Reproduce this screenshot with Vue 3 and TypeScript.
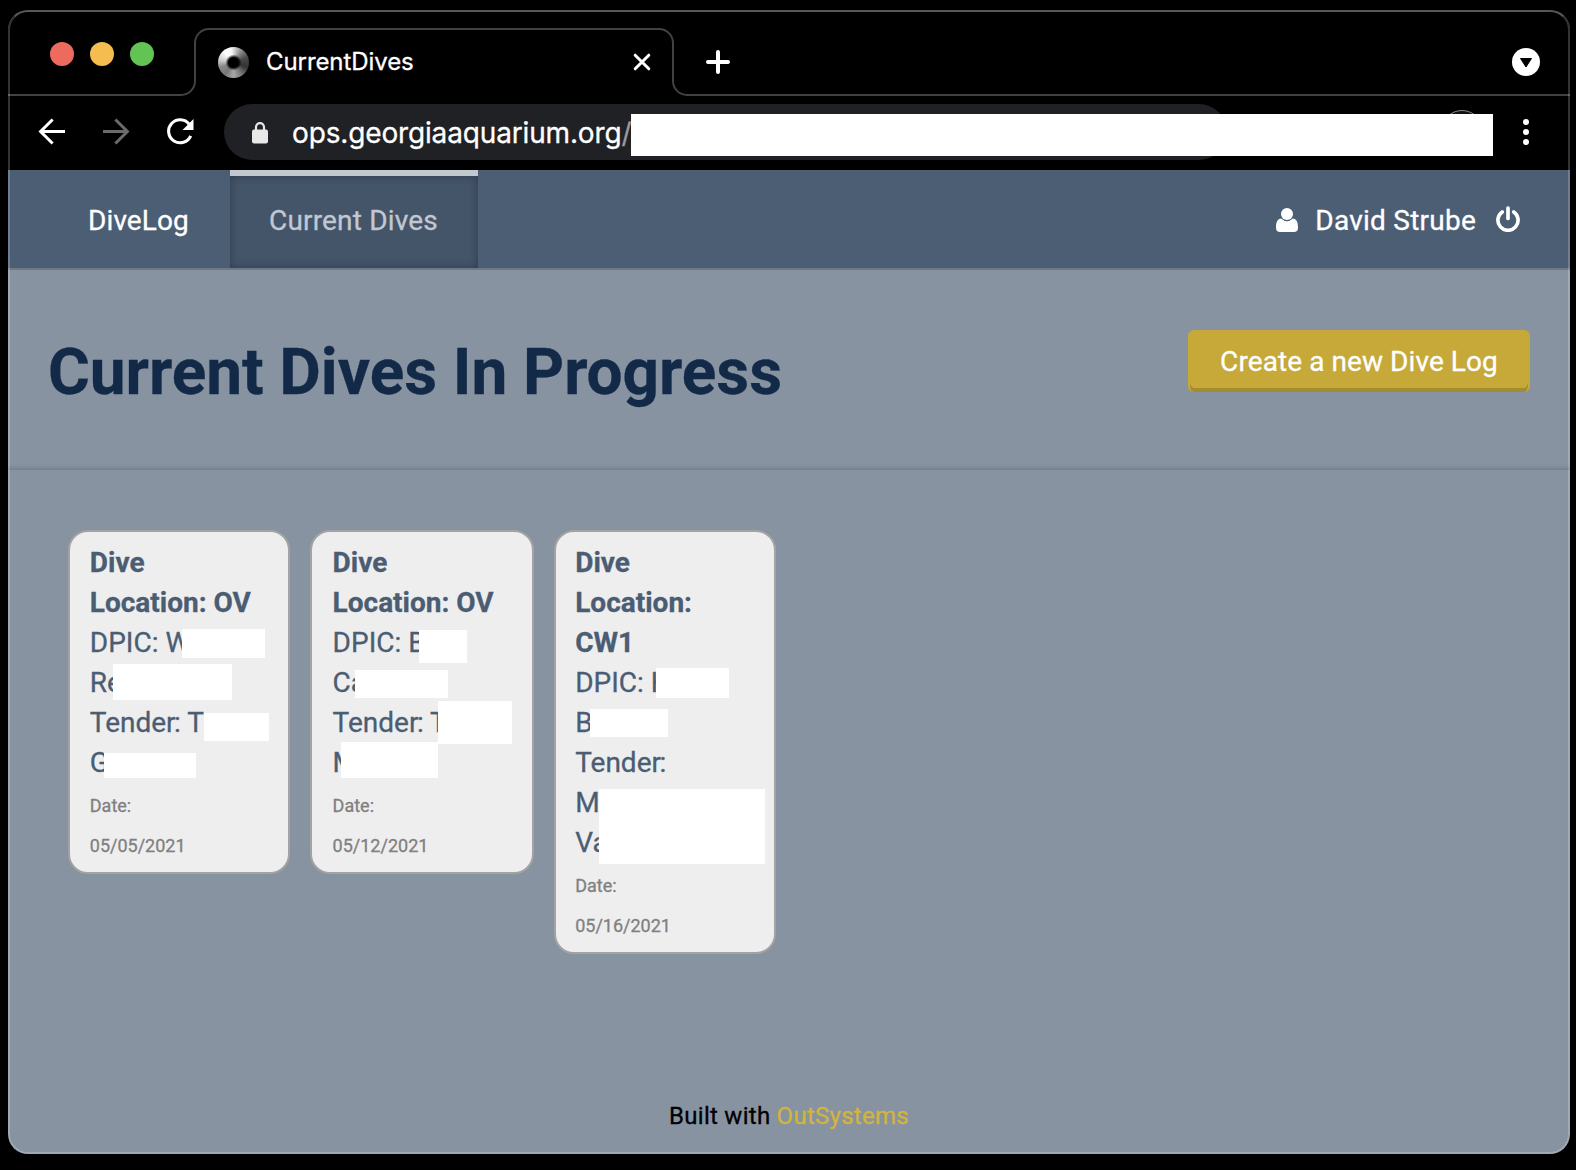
<script setup lang="ts">
interface Mask {
  x: number
  y: number
  w: number
  h: number
}

interface Dive {
  location: string[]
  dpic: string[]
  tender: string[]
  date: string
  masks: Mask[]
}

const dives: Dive[] = [
  {
    location: ['Dive', 'Location: OV'],
    dpic: ['DPIC: W', 'Re'],
    tender: ['T', 'G'],
    date: '05/05/2021',
    masks: [
      { x: 114, y: 99, w: 83, h: 29 },
      { x: 45, y: 134, w: 119, h: 36 },
      { x: 136, y: 183, w: 65, h: 28 },
      { x: 36, y: 223, w: 92, h: 25 },
    ],
  },
  {
    location: ['Dive', 'Location: OV'],
    dpic: ['DPIC: B', 'Ca'],
    tender: ['T', 'M'],
    date: '05/12/2021',
    masks: [
      { x: 109, y: 100, w: 48, h: 33 },
      { x: 45, y: 140, w: 93, h: 28 },
      { x: 128, y: 171, w: 74, h: 43 },
      { x: 31, y: 212, w: 97, h: 36 },
    ],
  },
  {
    location: ['Dive', 'Location:', 'CW1'],
    dpic: ['DPIC: H', 'B'],
    tender: ['', 'M', 'Va'],
    date: '05/16/2021',
    masks: [
      { x: 102, y: 138, w: 73, h: 30 },
      { x: 36, y: 179, w: 78, h: 28 },
      { x: 45, y: 259, w: 166, h: 75 },
    ],
  },
]

const maskStyle = (m: Mask) => ({
  left: `${m.x - 2}px`,
  top: `${m.y - 2}px`,
  width: `${m.w}px`,
  height: `${m.h}px`,
})
</script>

<template>
  <div class="desktop">
    <div class="window">
      <div class="tabstrip">
        <svg class="outline" width="1562" height="86" viewBox="0 0 1562 86" fill="none" stroke="#424242" stroke-width="2">
          <path d="M0 85H173a14 14 0 0 0 14-14V33a14 14 0 0 1 14-14H651a14 14 0 0 1 14 14V71a14 14 0 0 0 14 14H1562" />
        </svg>
        <div class="lights">
          <i class="red"></i><i class="yellow"></i><i class="green"></i>
        </div>
        <div class="tab">
          <span class="favicon"></span>
          <span class="tab-title">CurrentDives</span>
          <svg class="close" width="18" height="18" viewBox="0 0 18 18" stroke="#fff" stroke-width="3" stroke-linecap="round">
            <path d="M2.2 2.2L15.8 15.8M15.8 2.2L2.2 15.8" />
          </svg>
        </div>
        <svg class="plus" width="24" height="24" viewBox="0 0 24 24" stroke="#fff" stroke-width="4" stroke-linecap="round">
          <path d="M12 2V22M2 12H22" />
        </svg>
        <svg class="tabsearch" width="28" height="28" viewBox="0 0 28 28">
          <circle cx="14" cy="14" r="14" fill="#fff" />
          <path d="M8.5 10.5H19.5L14 19Z" fill="#000" stroke="#000" stroke-linejoin="round" />
        </svg>
      </div>

      <div class="toolbar">
        <svg class="back" width="28" height="28" viewBox="0 0 28 28" fill="none" stroke="#fff" stroke-width="3">
          <path d="M27 13.5H3M14.6 1.5L2.6 13.5L14.6 25.5" />
        </svg>
        <svg class="forward" width="28" height="28" viewBox="0 0 28 28" fill="none" stroke="#6b6b6b" stroke-width="3">
          <path d="M0 13.5H24M12.4 1.5L24.4 13.5L12.4 25.5" />
        </svg>
        <svg class="reload" width="28" height="28" viewBox="0 0 28 28">
          <path d="M23.2 6.2A11.5 11.5 0 1 0 24.7 17.8" fill="none" stroke="#fff" stroke-width="3.1" />
          <path d="M27.5 1V12H16.5Z" fill="#fff" />
        </svg>
        <div class="omnibox">
          <svg class="lock" width="16" height="22" viewBox="0 0 16 22">
            <path d="M4 9V5.2a4 4 0 0 1 8 0V9" fill="none" stroke="#e8e8e8" stroke-width="2.2" />
            <rect y="7.5" width="16" height="14" rx="2" fill="#e8e8e8" />
          </svg>
          <span class="url">ops.georgiaaquarium.org<span class="slash">/</span></span>
        </div>
        <span class="avatar"></span>
        <span class="url-mask"></span>
        <svg class="kebab" width="6" height="28" viewBox="0 0 6 28" fill="#fff">
          <circle cx="3" cy="4" r="3" /><circle cx="3" cy="14" r="3" /><circle cx="3" cy="24" r="3" />
        </svg>
      </div>

      <nav class="nav">
        <a class="brand">DiveLog</a>
        <a class="active"><span>Current Dives</span></a>
        <div class="user">
          <svg width="22" height="24" viewBox="0 0 22 24" fill="#fff">
            <circle cx="11" cy="6" r="6" />
            <path d="M5.2 10.6Q11 16 16.8 10.6C20.4 10.9 22 14 22 19.4Q22 24 17.7 24H4.3Q0 24 0 19.4C0 14 1.6 10.9 5.2 10.6Z" />
          </svg>
          <span class="name">David Strube</span>
          <svg class="power" width="24" height="26" viewBox="0 0 24 26" fill="none" stroke="#fff" stroke-width="3.7" stroke-linecap="round">
            <path d="M12 2V12.5" />
            <path d="M6.2 5.9A10.1 10.1 0 1 0 17.8 5.9" />
          </svg>
        </div>
      </nav>

      <header class="header">
        <h1>Current Dives In Progress</h1>
        <button class="create">Create a new Dive Log</button>
      </header>

      <main class="cards">
        <article v-for="dive in dives" :key="dive.date" class="card">
          <div v-for="line in dive.location" :key="line" class="line bold">{{ line }}</div>
          <div v-for="line in dive.dpic" :key="line" class="line">{{ line }}</div>
          <div class="line">Tende<span class="tight">r</span>: {{ dive.tender[0] }}</div>
          <div v-for="line in dive.tender.slice(1)" :key="line" class="line">{{ line }}</div>
          <div class="line"><small>Date:</small></div>
          <div class="line"><small>{{ dive.date }}</small></div>
          <span v-for="(m, i) in dive.masks" :key="i" class="mask" :style="maskStyle(m)"></span>
        </article>
      </main>

      <footer class="footer">Built with&nbsp;<a>OutSystems</a></footer>
    </div>
  </div>
</template>

<style>
body {
  margin: 0;
  background: #000;
}
</style>

<style scoped>
* {
  box-sizing: border-box;
}
svg {
  display: block;
  flex: none;
}
.desktop {
  width: 1576px;
  height: 1170px;
  padding: 10px 6px 16px 8px;
  background: #000;
  overflow: hidden;
}
.window {
  position: relative;
  display: flex;
  flex-direction: column;
  width: 1562px;
  height: 1144px;
  border-radius: 20px;
  overflow: hidden;
  background: #8793a1;
  font-family: Roboto, 'Liberation Sans', sans-serif;
  font-size: 28px;
  line-height: 40px;
  color: #4b5d73;
  -webkit-text-stroke: 0.3px currentColor;
}
.window::after {
  content: '';
  position: absolute;
  inset: 0;
  border: 2px solid rgba(255, 255, 255, 0.2);
  border-top-color: rgba(255, 255, 255, 0.34);
  border-radius: 20px;
  pointer-events: none;
}
.tabstrip {
  position: relative;
  display: flex;
  flex: none;
  height: 86px;
  background: #000;
}
.outline {
  position: absolute;
  inset: 0;
}
.lights {
  display: flex;
  gap: 16px;
  width: 186px;
  padding: 32px 0 0 42px;
}
.lights i {
  width: 24px;
  height: 24px;
  border-radius: 50%;
}
.red { background: #ed6a5f; }
.yellow { background: #f5bd4f; }
.green { background: #61c454; }
.tab {
  display: flex;
  align-items: center;
  width: 480px;
  height: 66px;
  margin-top: 19px;
  padding: 0 23px 0 24px;
}
.favicon {
  width: 31px;
  height: 31px;
  border-radius: 50%;
  background:
    radial-gradient(circle, #000 0 5px, transparent 8px),
    conic-gradient(#ddd, #888 35deg, #484848 70deg, #333 110deg, #777 145deg, #a8a8a8 180deg, #777 215deg, #888 250deg, #ccc 280deg, #fff 320deg, #f8f8f8 350deg, #ddd);
}
.tab-title {
  margin-left: 17px;
  font-family: Inter, 'Liberation Sans', sans-serif;
  font-size: 24px;
  letter-spacing: -0.08px;
  color: #fff;
}
.close {
  margin-left: auto;
}
.plus {
  margin: 40px 0 0 32px;
}
.tabsearch {
  margin: 38px 30px 0 auto;
}
.toolbar {
  position: relative;
  display: flex;
  align-items: center;
  flex: none;
  height: 74px;
  padding: 0 41px 2px 30px;
  background: #000;
}
.forward {
  margin-left: 37px;
}
.reload {
  margin-left: 35px;
}
.omnibox {
  display: flex;
  align-items: center;
  flex: none;
  width: 1003px;
  height: 56px;
  margin-left: 30px;
  padding-left: 28px;
  border-radius: 28px;
  background: #202124;
}
.lock {
  margin-top: 2px;
}
.url {
  margin: 1px 0 0 24px;
  font-family: Inter, 'Liberation Sans', sans-serif;
  font-size: 28px;
  letter-spacing: -0.15px;
  color: #fff;
}
.slash {
  color: #9a9a9b;
}
.url-mask {
  position: absolute;
  left: 623px;
  top: 18px;
  width: 862px;
  height: 42px;
  background: #fff;
}
.avatar {
  position: absolute;
  left: 1433px;
  top: 14px;
  width: 42px;
  height: 42px;
  border: 1px solid #8b8984;
  border-radius: 50%;
  background: #111;
}
.kebab {
  margin-left: auto;
}
.nav {
  display: flex;
  flex: none;
  height: 100px;
  border-bottom: 2px solid #6f7986;
  background: #4c5e74;
  color: #fff;
}
.brand {
  width: 222px;
  padding: 31px 0 0 80px;
  letter-spacing: 0.1px;
}
.active {
  width: 248px;
  padding: 25px 0 0 39px;
  border-top: 6px solid #c1c8ce;
  background: #445469;
  box-shadow: inset 0 0 8px rgba(0, 0, 0, 0.3);
  color: #c1c8d1;
  letter-spacing: 0.18px;
}
.user {
  display: flex;
  align-items: center;
  margin-left: auto;
  padding-right: 50px;
  padding-top: 4px;
}
.user svg {
  margin-top: -2px;
}
.user .power {
  margin-top: -4px;
}
.name {
  margin: 0 20px 0 17px;
  letter-spacing: 0.24px;
}
.header {
  display: flex;
  justify-content: space-between;
  align-items: flex-start;
  flex: none;
  height: 200px;
  padding: 60px 40px 0;
  background: linear-gradient(transparent 195px, rgba(0, 0, 0, 0.12) 200px);
}
h1 {
  margin: 3px 0 0;
  font-size: 64px;
  font-weight: 700;
  line-height: 80px;
  letter-spacing: -0.08px;
  color: #122947;
}
.create {
  width: 342px;
  height: 62px;
  padding: 0;
  border: 2px solid #c6a938;
  border-bottom: 0;
  border-radius: 6px;
  background: #c6a938;
  box-shadow: inset 0 -4px #a38b31;
  font: 28px/40px Roboto, 'Liberation Sans', sans-serif;
  letter-spacing: 0.08px;
  color: #fff;
  -webkit-text-stroke: inherit;
}
.cards {
  display: flex;
  align-items: flex-start;
  gap: 20px;
  flex: 1;
  padding: 60px;
}
.card {
  position: relative;
  flex: none;
  width: 222px;
  padding: 11px 0 9px 19.8px;
  border: 2px solid #a3a3a3;
  border-radius: 20px;
  background: #eee;
}
.card:nth-child(2) {
  width: 224px;
  padding-left: 20.6px;
}
.card:nth-child(3) {
  padding-left: 19.2px;
}
.line {
  height: 40px;
  white-space: nowrap;
}
.bold {
  font-weight: 700;
}
.tight {
  letter-spacing: -1.5px;
}
small {
  font-size: 18px;
  color: #808080;
}
.mask {
  position: absolute;
  background: #fff;
}
.footer {
  display: flex;
  justify-content: center;
  flex: none;
  height: 58px;
  font-size: 24px;
  letter-spacing: 0.27px;
  color: #000;
}
.footer a {
  color: #d3b43d;
}
</style>
